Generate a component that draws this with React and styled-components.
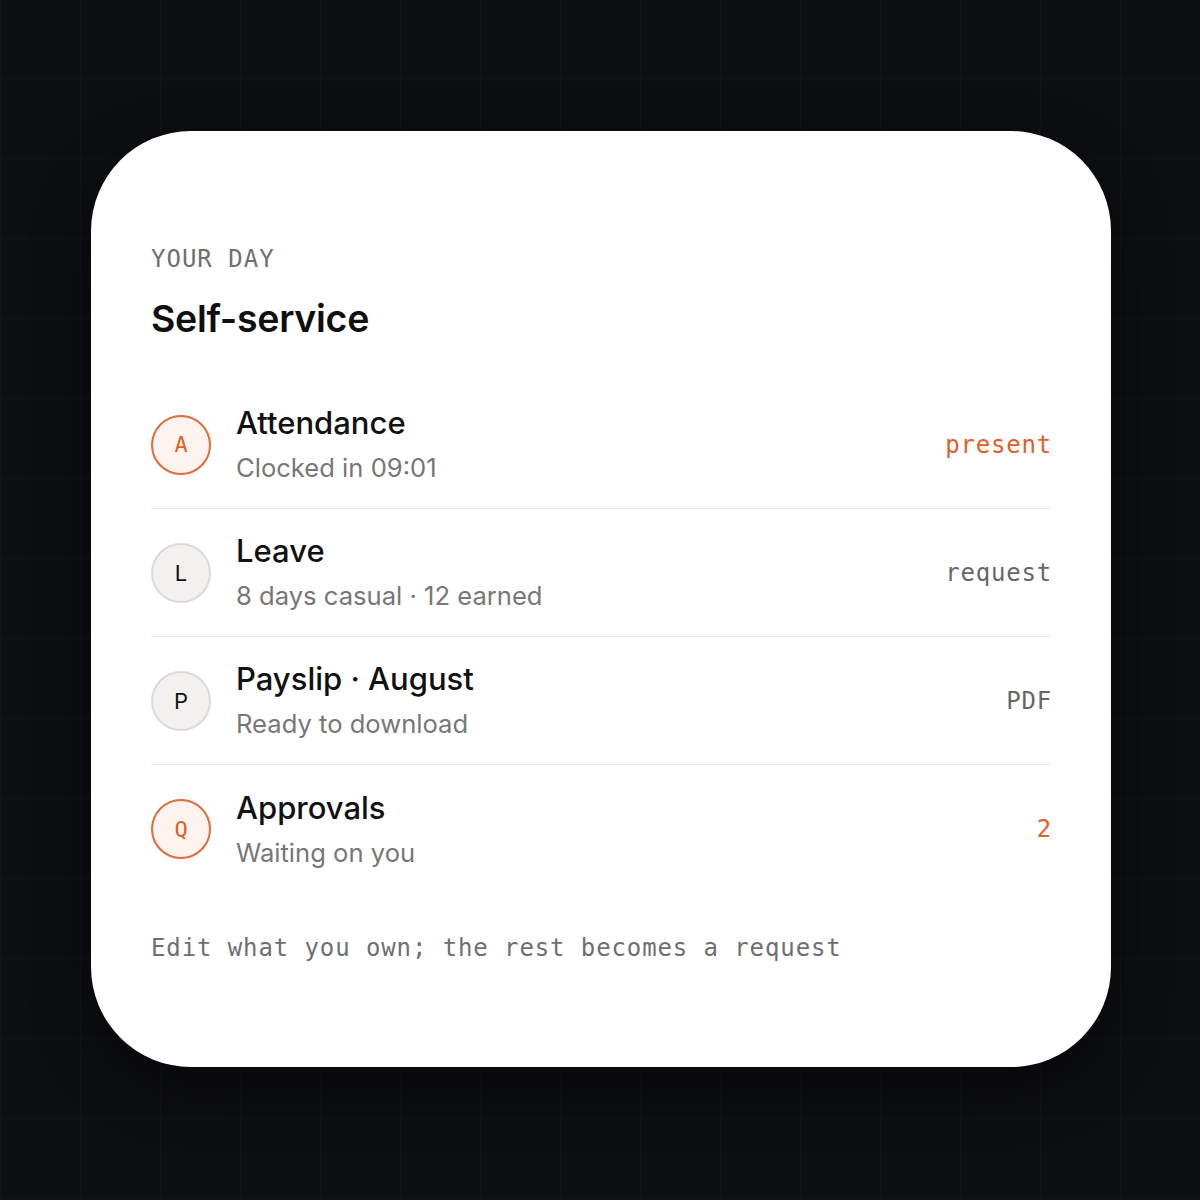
import React from "react";
import styled, { createGlobalStyle } from "styled-components";

const GlobalStyle = createGlobalStyle`
  html, body {
    margin: 0;
    padding: 0;
    background: #0d0e10;
  }
  body {
    font-family: Inter, "Noto Sans", sans-serif;
  }
`;

const rows = [
  { letter: "A", title: "Attendance", sub: "Clocked in 09:01", value: "present", accent: true },
  { letter: "L", title: "Leave", sub: "8 days casual · 12 earned", value: "request" },
  { letter: "P", title: "Payslip · August", sub: "Ready to download", value: "PDF" },
  { letter: "Q", title: "Approvals", sub: "Waiting on you", value: "2", accent: true },
];

const App = () => {
  return (
    <>
      <GlobalStyle />
      <Page>
        <Card>
          <Eyebrow>YOUR DAY</Eyebrow>
          <Title>Self-service</Title>
          <List>
            {rows.map((row) => (
              <Row key={row.letter}>
                <Avatar $accent={row.accent}>{row.letter}</Avatar>
                <Text>
                  <RowTitle>{row.title}</RowTitle>
                  <RowSub>{row.sub}</RowSub>
                </Text>
                <Value $accent={row.accent}>{row.value}</Value>
              </Row>
            ))}
          </List>
          <Footer>Edit what you own; the rest becomes a request</Footer>
        </Card>
      </Page>
    </>
  );
};

const Page = styled.div`
  width: 1200px;
  height: 1200px;
  box-sizing: border-box;
  padding: 131px 89px 0 91px;
  background-color: #0d0e10;
  background-image: linear-gradient(to right, #121316 1px, transparent 1px),
    linear-gradient(to bottom, #121316 1px, transparent 1px);
  background-size: 80px 80px;
  background-position: 0 -2px;
`;

const Card = styled.div`
  width: 1020px;
  height: 936px;
  box-sizing: border-box;
  background: #ffffff;
  border-radius: 100px;
  padding: 114px 60px 0;
  box-shadow: 0 20px 60px rgba(0, 0, 0, 0.45);
  display: flex;
  flex-direction: column;
`;

const Eyebrow = styled.div`
  font-family: "DejaVu Sans Mono", "Liberation Mono", monospace;
  font-size: 24px;
  line-height: 28px;
  letter-spacing: 1px;
  color: #6f6f6f;
`;

const Title = styled.h1`
  margin: 24px 0 0;
  font-family: Inter, "Noto Sans", sans-serif;
  font-weight: 600;
  font-size: 37.5px;
  line-height: 44px;
  letter-spacing: -0.3px;
  color: #0f0f10;
`;

const List = styled.div`
  margin-top: 40px;
  display: flex;
  flex-direction: column;
`;

const Row = styled.div`
  height: 128px;
  box-sizing: border-box;
  display: flex;
  align-items: center;
  gap: 25px;
  border-bottom: 1.5px solid #e8e8e8;

  &:last-child {
    border-bottom: none;
  }
`;

const Avatar = styled.div`
  width: 60px;
  height: 60px;
  flex: none;
  box-sizing: border-box;
  border-radius: 50%;
  display: flex;
  align-items: center;
  justify-content: center;
  font-family: ${(p) =>
    p.$accent
      ? `"DejaVu Sans Mono", "Liberation Mono", monospace`
      : `Inter, "Noto Sans", sans-serif`};
  font-size: 22px;
  border: 2px solid ${(p) => (p.$accent ? "#e26a38" : "#dadad8")};
  background: ${(p) => (p.$accent ? "#fdf4ef" : "#f2f1ef")};
  color: ${(p) => (p.$accent ? "#e0602a" : "#111111")};
`;

const Text = styled.div`
  flex: 1;
  display: flex;
  flex-direction: column;
  gap: 11px;
`;

const RowTitle = styled.div`
  font-size: 31px;
  line-height: 36px;
  font-weight: 500;
  color: #111111;
`;

const RowSub = styled.div`
  font-size: 25.6px;
  line-height: 32px;
  color: #777777;
`;

const Value = styled.div`
  font-family: "DejaVu Sans Mono", "Liberation Mono", monospace;
  font-size: 24px;
  letter-spacing: 0.8px;
  margin-right: -1px;
  color: ${(p) => (p.$accent ? "#e0602a" : "#666666")};
`;

const Footer = styled.div`
  margin-top: 40px;
  font-family: "DejaVu Sans Mono", "Liberation Mono", monospace;
  font-size: 24px;
  line-height: 30px;
  letter-spacing: 0.9px;
  color: #6f6f6f;
`;

export default App;
